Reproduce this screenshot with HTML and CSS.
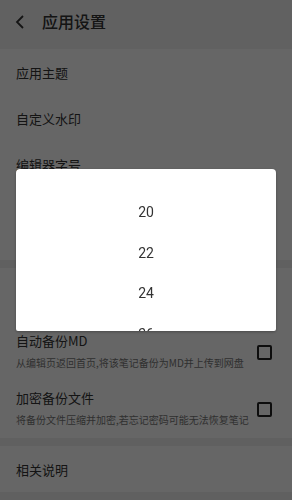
FILE: index.html
```html
<!DOCTYPE html>
<html lang="zh-CN">
<head>
    <meta charset="UTF-8">
    <meta name="viewport" content="width=device-width, initial-scale=1.0">
    <title>应用设置</title>
    <link rel="stylesheet" href="styles.css">
</head>
<body>
    <div class="page">
        <div class="header">
            <svg class="back" width="10" height="14" viewBox="0 0 10 14">
                <path d="M8 1 L2 7 L8 13" fill="none" stroke="#333" stroke-width="1.8"/>
            </svg>
            <span class="title">应用设置</span>
        </div>

        <div class="group group-top">
            <div class="row">应用主题</div>
            <div class="row">自定义水印</div>
            <div class="row">编辑器字号</div>
            <div class="row row-empty"></div>
        </div>

        <div class="group">
            <div class="row row-empty row-tall"></div>
            <div class="row row-check">
                <div class="text">
                    <div class="name">自动备份MD</div>
                    <div class="desc">从编辑页返回首页,将该笔记备份为MD并上传到网盘</div>
                </div>
                <span class="checkbox"></span>
            </div>
            <div class="row row-check">
                <div class="text">
                    <div class="name">加密备份文件</div>
                    <div class="desc">将备份文件压缩并加密,若忘记密码可能无法恢复笔记</div>
                </div>
                <span class="checkbox"></span>
            </div>
        </div>

        <div class="group">
            <div class="row">相关说明</div>
        </div>
    </div>

    <div class="overlay"></div>

    <div class="dialog">
        <div class="picker">
            <div class="item">20</div>
            <div class="item">22</div>
            <div class="item">24</div>
            <div class="item">26</div>
        </div>
    </div>
</body>
</html>
```

FILE: styles.css
```css
body {
    margin: 0;
    font-family: "Noto Sans CJK SC", "Noto Sans", sans-serif;
    background: #fff;
    color: #333;
}

.page {
    width: 292px;
    height: 500px;
    overflow: hidden;
}

.header {
    height: 49px;
    box-sizing: border-box;
    background: #f2f2f2;
    display: flex;
    align-items: flex-start;
    padding: 10px 0 0 15px;
}

.back {
    margin: 5px 17px 0 0;
}

.title {
    font-size: 16px;
    line-height: 23px;
    font-weight: 500;
    color: #333;
}

.group {
    background: #fff;
    border-bottom: 8px solid #f0f0f0;
}

.row {
    height: 46px;
    display: flex;
    align-items: center;
    padding: 0 16px;
    font-size: 13px;
    color: #333;
}

.row-empty {
    height: 73px;
}

.row-tall {
    height: 56px;
}

.row-check {
    height: 57px;
    justify-content: space-between;
}

.name {
    font-size: 13px;
    line-height: 18px;
    margin-top: -4px;
}

.desc {
    font-size: 10px;
    line-height: 14px;
    margin-top: 6px;
    color: #777;
}

.checkbox {
    width: 11px;
    height: 11px;
    border: 2px solid #222;
    border-radius: 2px;
    margin-right: 4px;
}

.overlay {
    position: fixed;
    inset: 0;
    background: rgba(0, 0, 0, 0.6);
}

.dialog {
    position: fixed;
    left: 16px;
    top: 169px;
    width: 260px;
    height: 162px;
    background: #fff;
    border-radius: 4px 4px 2px 2px;
    box-shadow: 0 1px 3px rgba(0, 0, 0, 0.3);
    overflow: hidden;
}

.picker {
    padding-top: 23px;
}

.item {
    height: 40.5px;
    display: flex;
    align-items: center;
    justify-content: center;
    font-family: Roboto, "Noto Sans", sans-serif;
    font-size: 14px;
    color: #333;
}
```
